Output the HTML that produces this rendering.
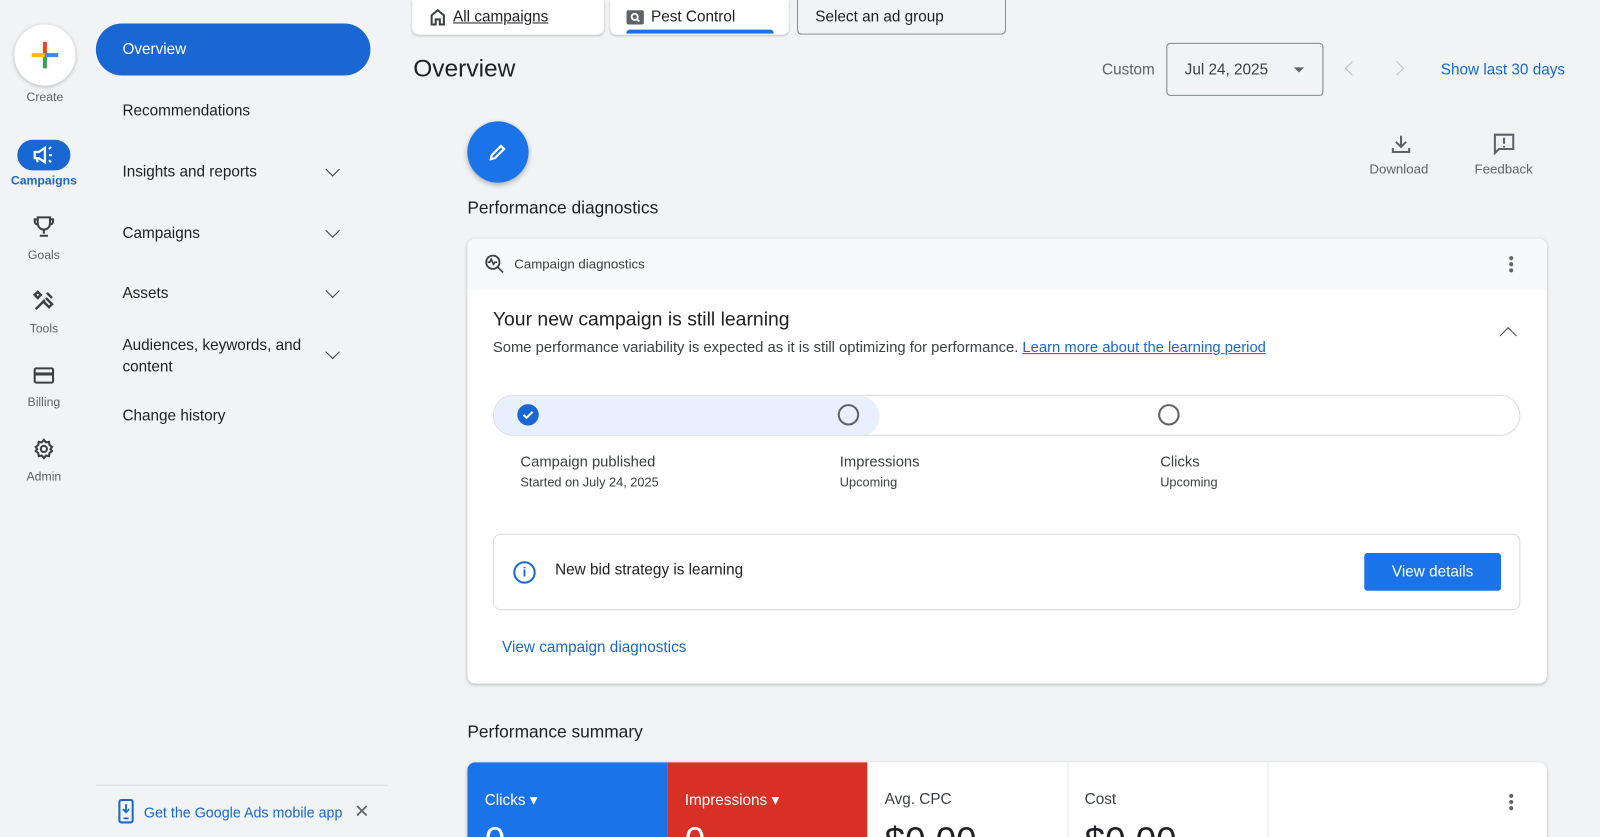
<!DOCTYPE html>
<html><head><meta charset="utf-8"><style>
*{box-sizing:border-box;margin:0;padding:0}
html,body{width:1600px;height:837px;overflow:hidden;background:#f1f3f4}
body{font-family:"Liberation Sans",Arial,sans-serif;color:#202124;position:relative}
#w{position:absolute;left:0;top:0;width:1568px;height:821px;transform:scale(1.0204);transform-origin:0 0}
.a{position:absolute}
.nav{font-size:15px;color:#202124}
.rail{font-size:12px;color:#5f6368;text-align:center;width:86px;left:0}
.chev{width:10px;height:10px;border-right:1.8px solid #3c4043;border-bottom:1.8px solid #3c4043;transform:rotate(45deg)}
.card{background:#fff;border-radius:8px;box-shadow:0 1px 3px rgba(60,64,67,.3)}
</style></head><body><div id="w">
<div class="a" style="left:14px;top:24px;width:60px;height:60px;border-radius:50%;background:#fff;box-shadow:0 1px 4px rgba(0,0,0,.25)"></div>
<div class="a" style="left:42px;top:41px;width:4px;height:13px;background:#ea4335"></div>
<div class="a" style="left:42px;top:54px;width:4px;height:13px;background:#34a853"></div>
<div class="a" style="left:31px;top:52px;width:13px;height:4px;background:#fbbc04"></div>
<div class="a" style="left:44px;top:52px;width:13px;height:4px;background:#4285f4"></div>
<div class="a rail" style="top:88px;width:88px">Create</div>
<div class="a" style="left:17px;top:137px;width:52px;height:30px;border-radius:15px;background:#1967d2"></div>
<svg class="a" style="left:31px;top:141px" width="24" height="22" viewBox="0 0 24 22"><path d="M3 8h4l6-4v14l-6-4H3z M5 14l1 4" fill="none" stroke="#fff" stroke-width="2.2"/><path d="M17 5l2-2M17 11h3M17 16l2 2" stroke="#fff" stroke-width="2"/></svg>
<div class="a rail" style="top:170px;color:#1967d2;font-weight:bold">Campaigns</div>
<svg class="a" style="left:31px;top:210px" width="24" height="24" viewBox="0 0 24 24"><path d="M6 3h12v6a6 6 0 0 1-12 0zM6 5H3v2a3 3 0 0 0 3 3M18 5h3v2a3 3 0 0 1-3 3M12 15v4M8 21h8" fill="none" stroke="#3c4043" stroke-width="2"/></svg>
<div class="a rail" style="top:243px">Goals</div>
<svg class="a" style="left:31px;top:283px" width="24" height="24" viewBox="0 0 24 24"><path d="M4 20l9-9M15 4l5 5M14 9l6 6-3 3-6-6M3 6l3-3 3 3-3 3z" fill="none" stroke="#3c4043" stroke-width="2.4"/></svg>
<div class="a rail" style="top:315px">Tools</div>
<svg class="a" style="left:31px;top:356px" width="24" height="24" viewBox="0 0 24 24"><rect x="3" y="5" width="18" height="14" rx="1.5" fill="none" stroke="#3c4043" stroke-width="2"/><rect x="3" y="9" width="18" height="3" fill="#3c4043"/></svg>
<div class="a rail" style="top:387px">Billing</div>
<svg class="a" style="left:31px;top:428px" width="24" height="24" viewBox="0 0 24 24"><circle cx="12" cy="12" r="3" fill="none" stroke="#3c4043" stroke-width="2"/><path d="M12 3l2 2.5 3-.5 .5 3 2.5 2-1.5 2 1.5 2-2.5 2-.5 3-3-.5-2 2.5-2-2.5-3 .5-.5-3-2.5-2 1.5-2-1.5-2 2.5-2 .5-3 3 .5z" fill="none" stroke="#3c4043" stroke-width="2"/></svg>
<div class="a rail" style="top:460px">Admin</div>
<div class="a" style="left:94px;top:23px;width:269px;height:51px;border-radius:26px;background:#1967d2"></div>
<div class="a nav" style="left:120px;top:40px;color:#fff">Overview</div>
<div class="a nav" style="left:120px;top:100px">Recommendations</div>
<div class="a nav" style="left:120px;top:160px">Insights and reports</div><div class="a chev" style="left:321px;top:161px"></div>
<div class="a nav" style="left:120px;top:220px">Campaigns</div><div class="a chev" style="left:321px;top:221px"></div>
<div class="a nav" style="left:120px;top:279px">Assets</div><div class="a chev" style="left:321px;top:280px"></div>
<div class="a nav" style="left:120px;top:328px;line-height:21px">Audiences, keywords, and<br>content</div><div class="a chev" style="left:321px;top:340px"></div>
<div class="a nav" style="left:120px;top:399px">Change history</div>
<div class="a" style="left:94px;top:769px;width:286px;height:1px;background:#dadce0"></div>
<svg class="a" style="left:115px;top:783px" width="18" height="25" viewBox="0 0 18 25"><rect x="2" y="1" width="13" height="22" rx="2" fill="none" stroke="#1967d2" stroke-width="2"/><path d="M8.5 5v8M5.5 10l3 3 3-3M6 19h5" stroke="#1967d2" stroke-width="1.8" fill="none"/></svg>
<div class="a" style="left:141px;top:788px;font-size:14px;color:#1967d2">Get the Google Ads mobile app</div>
<div class="a" style="left:347px;top:785px;font-size:18px;color:#5f6368">✕</div>
<div class="a" style="left:404px;top:0;width:188px;height:34px;background:#fff;border-radius:0 0 6px 6px;box-shadow:0 1px 2px rgba(0,0,0,.2)"></div>
<svg class="a" style="left:421px;top:8px" width="16" height="17" viewBox="0 0 16 17"><path d="M2 16V7l6-5 6 5v9h-4v-5H6v5z" fill="none" stroke="#3c4043" stroke-width="2"/></svg>
<div class="a" style="left:444px;top:8px;font-size:15px;text-decoration:underline;color:#202124">All campaigns</div>
<div class="a" style="left:598px;top:0;width:175px;height:34px;background:#fff;border-radius:0 0 6px 6px;box-shadow:0 1px 2px rgba(0,0,0,.2)"></div>
<div class="a" style="left:614px;top:10px;width:17px;height:14px;background:#5f6368;border-radius:2px"></div>
<svg class="a" style="left:614px;top:10px" width="17" height="14"><circle cx="8" cy="6.5" r="3" fill="none" stroke="#fff" stroke-width="1.8"/><path d="M10 8.5l2.5 2.5" stroke="#fff" stroke-width="1.8"/></svg>
<div class="a" style="left:638px;top:8px;font-size:15px">Pest Control</div>
<div class="a" style="left:614px;top:29px;width:144px;height:4px;background:#1a73e8;border-radius:3px 3px 0 0"></div>
<div class="a" style="left:781px;top:0;width:205px;height:34px;border:1px solid #80868b;border-top:none;border-radius:0 0 5px 5px"></div>
<div class="a" style="left:799px;top:8px;font-size:15px">Select an ad group</div>
<div class="a" style="left:405px;top:54px;font-size:24px">Overview</div>
<div class="a" style="left:1080px;top:60px;font-size:15px;color:#5f6368">Custom</div>
<div class="a" style="left:1143px;top:42px;width:154px;height:52px;border:1px solid #80868b;border-radius:4px"></div>
<div class="a" style="left:1161px;top:60px;font-size:15px;color:#3c4043">Jul 24, 2025</div>
<div class="a" style="left:1268px;top:66px;border-left:5px solid transparent;border-right:5px solid transparent;border-top:5px solid #5f6368"></div>
<div class="a chev" style="left:1320px;top:62px;transform:rotate(135deg);border-color:#bdc1c6"></div>
<div class="a chev" style="left:1364px;top:62px;transform:rotate(-45deg);border-color:#bdc1c6"></div>
<div class="a" style="left:1412px;top:60px;font-size:15px;color:#1967d2">Show last 30 days</div>
<div class="a" style="left:458px;top:119px;width:60px;height:60px;border-radius:50%;background:#1a73e8;box-shadow:0 2px 5px rgba(0,0,0,.3)"></div>
<svg class="a" style="left:476px;top:137px" width="24" height="24" viewBox="0 0 24 24"><path d="M5 19l1-4L15 6l3 3-9 9z" fill="none" stroke="#fff" stroke-width="2.2"/></svg>
<svg class="a" style="left:1362px;top:130px" width="22" height="22" viewBox="0 0 22 22"><path d="M11 3v11M6 9l5 5 5-5M3 15v4h16v-4" fill="none" stroke="#5f6368" stroke-width="2"/></svg>
<div class="a" style="left:1342px;top:158px;font-size:13px;color:#5f6368">Download</div>
<svg class="a" style="left:1462px;top:129px" width="24" height="24" viewBox="0 0 24 24"><path d="M3 3h18v14H7l-4 4z" fill="none" stroke="#5f6368" stroke-width="2"/><path d="M12 6v6M12 14v1.5" stroke="#5f6368" stroke-width="2"/></svg>
<div class="a" style="left:1445px;top:158px;font-size:13px;color:#5f6368">Feedback</div>
<div class="a" style="left:458px;top:194px;font-size:17px">Performance diagnostics</div>
<div class="a card" style="left:458px;top:234px;width:1058px;height:436px;overflow:hidden">
<div style="height:50px;background:#f8f9fa"></div>
</div>
<svg class="a" style="left:474px;top:248px" width="22" height="22" viewBox="0 0 22 22"><circle cx="9" cy="9" r="6.5" fill="none" stroke="#3c4043" stroke-width="1.8"/><path d="M14 14l5 5M4 9h2l1.5-3 2 5 1.5-2h2" fill="none" stroke="#3c4043" stroke-width="1.6"/></svg>
<div class="a" style="left:504px;top:251px;font-size:13px;color:#3c4043">Campaign diagnostics</div>
<div class="a" style="left:1479px;top:251px;width:4px;height:4px;border-radius:50%;background:#5f6368;box-shadow:0 6px 0 #5f6368,0 12px 0 #5f6368"></div>
<div class="a" style="left:483px;top:303px;font-size:19px">Your new campaign is still learning</div>
<div class="a chev" style="left:1472px;top:323px;transform:rotate(-135deg);width:12px;height:12px"></div>
<div class="a" style="left:483px;top:333px;font-size:14.5px;color:#3c4043">Some performance variability is expected as it is still optimizing for performance. <span style="color:#1967d2;text-decoration:underline">Learn more about the learning period</span></div>
<div class="a" style="left:483px;top:387px;width:1007px;height:40px;border:1px solid #dadce0;border-radius:20px;overflow:hidden"><div style="width:378px;height:40px;background:#e8f0fe;border-radius:0 20px 20px 0"></div></div>
<div class="a" style="left:507px;top:396px;width:21px;height:21px;border-radius:50%;background:#1967d2"></div>
<svg class="a" style="left:507px;top:396px" width="21" height="21"><path d="M6 10.5l3 3 6-6" fill="none" stroke="#fff" stroke-width="2"/></svg>
<div class="a" style="left:821px;top:396px;width:21px;height:21px;border-radius:50%;border:2px solid #5f6368"></div>
<div class="a" style="left:1135px;top:396px;width:21px;height:21px;border-radius:50%;border:2px solid #5f6368"></div>
<div class="a" style="left:510px;top:445px;font-size:14.5px;color:#3c4043">Campaign published</div>
<div class="a" style="left:510px;top:466px;font-size:12.5px;color:#3c4043">Started on July 24, 2025</div>
<div class="a" style="left:823px;top:445px;font-size:14.5px;color:#3c4043">Impressions</div>
<div class="a" style="left:823px;top:466px;font-size:12.5px;color:#3c4043">Upcoming</div>
<div class="a" style="left:1137px;top:445px;font-size:14.5px;color:#3c4043">Clicks</div>
<div class="a" style="left:1137px;top:466px;font-size:12.5px;color:#3c4043">Upcoming</div>
<div class="a" style="left:483px;top:523px;width:1007px;height:75px;border:1px solid #dadce0;border-radius:8px"></div>
<div class="a" style="left:503px;top:550px;width:22px;height:22px;border:2px solid #1967d2;border-radius:50%;color:#1967d2;font-size:13px;text-align:center;line-height:18px;font-weight:bold">i</div>
<div class="a" style="left:544px;top:550px;font-size:15px;color:#202124">New bid strategy is learning</div>
<div class="a" style="left:1337px;top:542px;width:134px;height:37px;background:#1a73e8;border-radius:3px;color:#fff;font-size:15px;text-align:center;line-height:37px">View details</div>
<div class="a" style="left:492px;top:626px;font-size:15px;color:#1967d2">View campaign diagnostics</div>
<div class="a" style="left:458px;top:708px;font-size:17px">Performance summary</div>
<div class="a card" style="left:458px;top:747px;width:1058px;height:100px;overflow:hidden">
<div class="a" style="left:0;top:0;width:196px;height:100px;background:#1a73e8"></div>
<div class="a" style="left:196px;top:0;width:196px;height:100px;background:#d93025"></div>
<div class="a" style="left:588px;top:0;width:1px;height:100px;background:#e8eaed"></div>
<div class="a" style="left:784px;top:0;width:1px;height:100px;background:#e8eaed"></div>
<div class="a" style="left:17px;top:28px;font-size:15px;color:#fff">Clicks ▾</div>
<div class="a" style="left:213px;top:28px;font-size:15px;color:#fff">Impressions ▾</div>
<div class="a" style="left:409px;top:28px;font-size:15px;color:#3c4043">Avg. CPC</div>
<div class="a" style="left:605px;top:28px;font-size:15px;color:#3c4043">Cost</div>
<div class="a" style="left:17px;top:56px;font-size:36px;color:#fff">0</div>
<div class="a" style="left:213px;top:56px;font-size:36px;color:#fff">0</div>
<div class="a" style="left:409px;top:56px;font-size:36px;color:#202124">$0.00</div>
<div class="a" style="left:605px;top:56px;font-size:36px;color:#202124">$0.00</div>
<div class="a" style="left:1021px;top:31px;width:4px;height:4px;border-radius:50%;background:#5f6368;box-shadow:0 6px 0 #5f6368,0 12px 0 #5f6368"></div>
</div>
</div></body></html>
